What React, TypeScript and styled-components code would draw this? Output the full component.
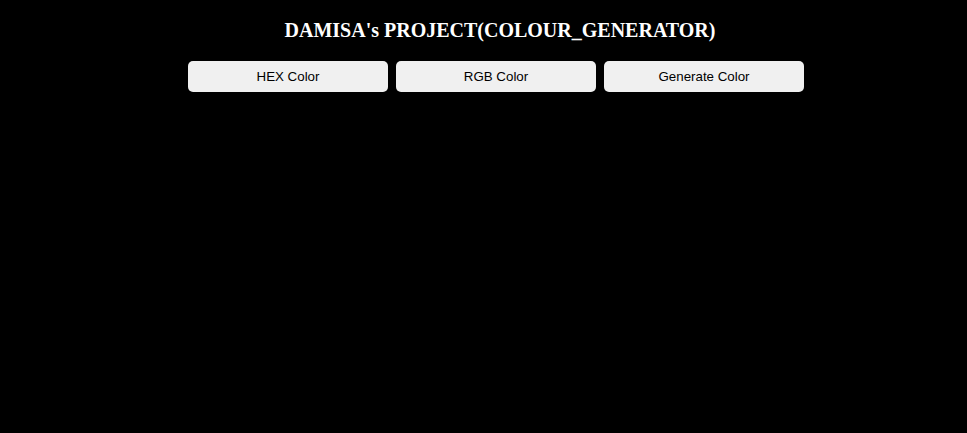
import * as React from 'react';
import styled, { createGlobalStyle } from 'styled-components';

const GlobalStyle = createGlobalStyle`
  html, body {
    margin: 0;
    padding: 0;
    background: #000000;
  }
  body {
    min-height: 433px;
  }
`;

const Page = styled.div`
  display: flex;
  flex-direction: column;
  align-items: center;
  padding-left: 25px;
  padding-top: 18px;
`;

const Title = styled.h2`
  margin: 0 0 0 8px;
  color: #ffffff;
  font-family: 'Liberation Serif', 'Times New Roman', serif;
  font-weight: bold;
  font-size: 20px;
  line-height: 24px;
`;

const Toolbar = styled.div`
  display: flex;
  gap: 8px;
  margin-top: 19px;
`;

const Button = styled.button`
  width: 200px;
  height: 31px;
  border: none;
  border-radius: 5px;
  background: #f0f0f0;
  color: #000000;
  font-family: 'Liberation Sans', Arial, sans-serif;
  font-size: 13.333px;
  cursor: pointer;
`;

const buttons = ['HEX Color', 'RGB Color', 'Generate Color'];

export default function App() {
  return (
    <>
      <GlobalStyle />
      <Page>
        <Title>DAMISA's PROJECT(COLOUR_GENERATOR)</Title>
        <Toolbar>
          {buttons.map((label) => (
            <Button key={label}>{label}</Button>
          ))}
        </Toolbar>
      </Page>
    </>
  );
}
